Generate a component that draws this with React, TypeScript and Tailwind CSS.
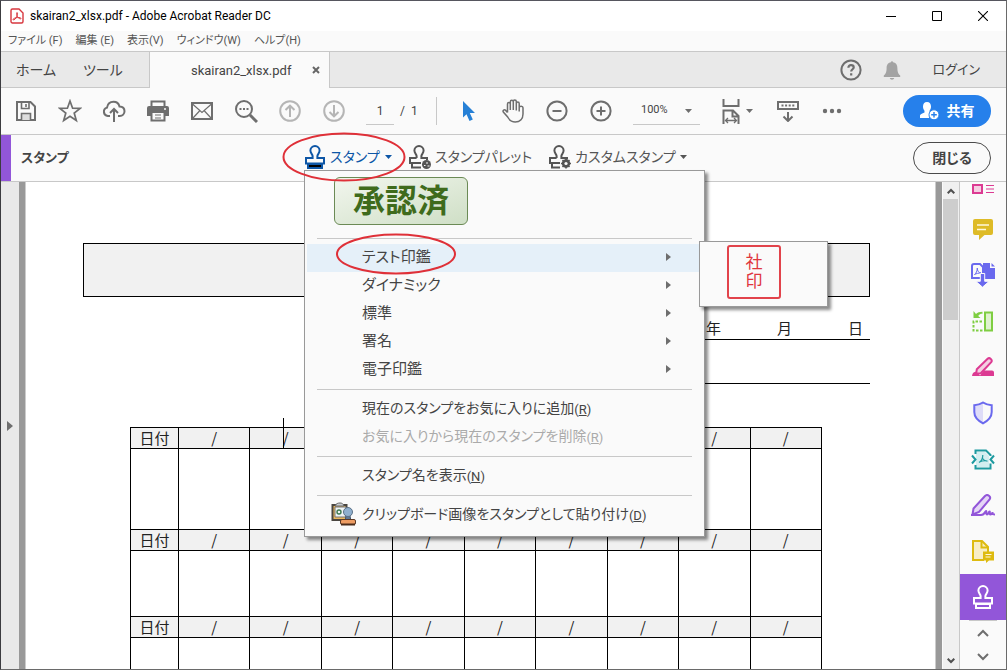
import type { ReactNode } from "react";

type IconProps = { w: number; h: number; className?: string; children: ReactNode };

function Svg({ w, h, className = "", children }: IconProps) {
  return (
    <svg
      width={w}
      height={h}
      viewBox={`0 0 ${w} ${h}`}
      fill="none"
      stroke="currentColor"
      strokeWidth="2"
      className={`shrink-0 ${className}`}
      aria-hidden="true"
    >
      {children}
    </svg>
  );
}

function Caret({ className = "" }: { className?: string }) {
  return (
    <Svg w={7} h={4} className={className}>
      <path d="M0 0h7L3.5 4z" fill="currentColor" stroke="none" />
    </Svg>
  );
}

const stampHead = "M7.6 13V11C7.6 9 5.4 8.4 5.4 5.6a4.6 4.6 0 0 1 9.2 0C14.6 8.4 12.4 9 12.4 11V13";

function StampIcon({ filled = false }: { filled?: boolean }) {
  return (
    <Svg w={20} h={24}>
      <path d={`${stampHead}H19V18.500H1V13z`} />
      <path d="M3 19h14v4H3z" />
      {filled && <path d="M4 20h12v2H4z" fill="#000" stroke="none" />}
    </Svg>
  );
}

function StampPaletteIcon() {
  return (
    <Svg w={22} h={24}>
      <path d={`${stampHead}H18V15M12 18H1V13h6.600M3 18v4.500h9`} />
      <circle cx="17.500" cy="19.500" r="4.500" fill="currentColor" stroke="none" />
      <path d="M15 20.500h1.500M18 17v2M18.500 21h2" stroke="#fafafa" strokeWidth="1" />
    </Svg>
  );
}

function StampGearIcon() {
  return (
    <Svg w={22} h={24}>
      <path d={`${stampHead}H18V14.500M11 18H1V13h6.600M3 18v4.500h8`} />
      <circle cx="17" cy="18.500" r="3" strokeWidth="2.400" />
      <path d="M17 13.500v10M12 18.500h10M13.500 15l7 7M20.500 15l-7 7" strokeWidth="1.600" />
      <circle cx="17" cy="18.500" r="1.600" fill="#fafafa" stroke="none" />
    </Svg>
  );
}

function ToolButton({ label, children, className = "w-11" }: { label: string; children: ReactNode; className?: string }) {
  return (
    <button type="button" aria-label={label} className={`flex h-8 shrink-0 items-center justify-center ${className}`}>
      {children}
    </button>
  );
}

function TitleBar() {
  return (
    <header className="flex h-[30px] shrink-0 items-center bg-white pl-[9px]">
      <Svg w={14} h={16} className="text-[#d7373f]">
        <path d="M2.500 1H9l4 4v8.500a1.500 1.500 0 0 1-1.500 1.500h-9A1.500 1.500 0 0 1 1 13.500v-11A1.500 1.500 0 0 1 2.500 1z" strokeWidth="1.400" />
        <path d="M3.200 11.800c-.8-1 2-2 4-2.200 2-.3 4 .1 3.800 1-.4 1-3-.6-3.800-2.400C6.500 6.700 6.300 4.600 7 4.600c.9 0 .5 2.500-.4 4.200-.8 1.600-2.600 3.900-3.400 3z" strokeWidth="1" />
      </Svg>
      <h1 className="ml-1.5 flex-1 text-xs whitespace-nowrap text-black">skairan2_xlsx.pdf - Adobe Acrobat Reader DC</h1>
      <div className="flex text-black">
        <ToolButton label="最小化" className="w-[46px]">
          <Svg w={10} h={10}><path d="M0 5.500h10" strokeWidth="1" /></Svg>
        </ToolButton>
        <ToolButton label="最大化" className="w-[46px]">
          <Svg w={10} h={10}><path d="M.5.5h9v9h-9z" strokeWidth="1" /></Svg>
        </ToolButton>
        <ToolButton label="ウィンドウを閉じる" className="w-[46px]">
          <Svg w={10} h={10}><path d="M0 0l10 10M10 0L0 10" strokeWidth="1.100" /></Svg>
        </ToolButton>
      </div>
    </header>
  );
}

function MenuBar() {
  const items = ["ファイル (F)", "編集 (E)", "表示(V)", "ウィンドウ(W)", "ヘルプ(H)"];
  return (
    <nav className="flex h-[21px] shrink-0 items-center gap-[13px] border-b border-[#c8c8c8] bg-[#fafafa] pl-[7px] text-[11px] text-[#555]">
      {items.map((t) => (
        <button key={t} type="button" className="whitespace-nowrap">{t}</button>
      ))}
    </nav>
  );
}

function TabBar() {
  return (
    <div className="flex h-9 shrink-0 bg-[#e9e9e9] text-[#444]">
      <div className="flex w-[149px] shrink-0 items-center gap-[27px] border-r border-b border-[#c8c8c8] pl-[15px] text-sm">
        <button type="button">ホーム</button>
        <button type="button">ツール</button>
      </div>
      <div className="flex w-[179px] shrink-0 items-center bg-[#fafafa] pl-[41px]">
        <button type="button" className="pt-0.5 text-[13px]">skairan2_xlsx.pdf</button>
        <button type="button" aria-label="タブを閉じる" className="ml-auto pr-[9px]">
          <Svg w={8} h={8} className="text-[#666]"><path d="M1 1l6 6M7 1L1 7" /></Svg>
        </button>
      </div>
      <div className="flex flex-1 items-center justify-end border-b border-l border-[#c8c8c8] pr-[26px]">
        <button type="button" aria-label="ヘルプ">
          <Svg w={22} h={22} className="text-[#6e6e6e]">
            <circle cx="11" cy="11" r="9.600" />
            <path d="M8.400 8.700C8.400 7 9.500 6.200 11 6.200s2.700.8 2.700 2.200c0 1.800-2.500 1.900-2.500 4.100M11.200 14.200v2.200" strokeWidth="2.200" />
          </Svg>
        </button>
        <button type="button" aria-label="通知" className="ml-[21px]">
          <Svg w={18} h={20} className="text-[#a3a3a3]">
            <path d="M8 2.200C8 .8 10 .8 10 2.200c3.300.6 4.400 2.900 4.400 6 0 4.300 1.200 6 2.800 7.300V17H.8v-1.500C2.400 14.200 3.600 12.500 3.600 8.200c0-3.100 1.100-5.400 4.400-6zM6.800 18h4.400c-.5 2.200-3.900 2.200-4.400 0z" fill="currentColor" stroke="none" />
          </Svg>
        </button>
        <button type="button" className="ml-8 text-[13px]">ログイン</button>
      </div>
    </div>
  );
}

function Toolbar() {
  return (
    <div className="flex h-[47px] shrink-0 items-center border-b border-[#c8c8c8] pl-[3px] text-[#6e6e6e]">
      <ToolButton label="保存">
        <Svg w={20} h={20}>
          <path d="M1 1h13.500L19 5.500V19H1z" />
          <path d="M5.500 1v6.500H13V1M10 3v3" strokeWidth="1.600" />
          <path d="M5.500 19v-6.500h9V19" fill="#ddd" strokeWidth="1.600" />
        </Svg>
      </ToolButton>
      <ToolButton label="お気に入り">
        <Svg w={24} h={24}>
          <path d="M12 2l2.600 7.200 7.600.2-6 4.700 2.100 7.400L12 17.200l-6.300 4.300 2.100-7.400-6-4.700 7.600-.2z" strokeWidth="1.700" />
        </Svg>
      </ToolButton>
      <ToolButton label="アップロード">
        <Svg w={24} h={22}>
          <path d="M8 16H5.800A4.300 4.300 0 0 1 5 7.600C5.600 4 8.300 1.800 11.500 1.800c3.300 0 5.300 2 6 4.700 3 .1 5 2.100 5 4.800 0 2.700-2 4.700-4.700 4.700H16" />
          <path d="M12 22V9M8 13l4-4 4 4" />
        </Svg>
      </ToolButton>
      <ToolButton label="印刷">
        <Svg w={22} h={22}>
          <path d="M4.500 7V1.500h13V7" />
          <path d="M2 6h18a2 2 0 0 1 2 2v8h-5v-4H5v4H0V8a2 2 0 0 1 2-2z" fill="currentColor" stroke="none" />
          <path d="M4.500 12v8.500h13V12z" fill="#fafafa" />
          <path d="M8 15h6M8 18h6" strokeWidth="1.200" />
          <path d="M17 9h2" stroke="#fafafa" strokeWidth="1.500" />
        </Svg>
      </ToolButton>
      <ToolButton label="メール">
        <Svg w={22} h={18}>
          <path d="M1 1h20v16H1z" />
          <path d="M1.500 2L11 10.500 20.500 2M2 16l6.500-7M20 16l-6.500-7" strokeWidth="1.200" />
        </Svg>
      </ToolButton>
      <ToolButton label="検索">
        <Svg w={24} h={24}>
          <circle cx="10" cy="10" r="8" />
          <path d="M16 16l7 7" strokeWidth="3" />
          <path d="M5.500 10h2M9 10h2M12.500 10h2" strokeWidth="1.800" />
        </Svg>
      </ToolButton>
      <ToolButton label="前のページ">
        <Svg w={22} h={22} className="text-[#b5b5b5]">
          <circle cx="11" cy="11" r="9.800" />
          <path d="M11 17V6M6.500 10L11 5.700l4.500 4.300" />
        </Svg>
      </ToolButton>
      <ToolButton label="次のページ">
        <Svg w={22} h={22} className="text-[#b5b5b5]">
          <circle cx="11" cy="11" r="9.800" />
          <path d="M11 5v11M6.500 12l4.500 4.300 4.500-4.300" />
        </Svg>
      </ToolButton>
      <div className="ml-[10px] flex items-center text-xs text-[#444]">
        <input aria-label="ページ番号" defaultValue="1" className="h-7 w-7 border-b border-[#c8c8c8] bg-transparent text-center outline-none" />
        <span className="ml-1.5 w-[17px] whitespace-nowrap">/&nbsp; 1</span>
      </div>
      <div className="ml-[19px] h-7 w-px shrink-0 bg-[#c8c8c8]" />
      <div className="ml-[10px] flex">
        <ToolButton label="選択ツール">
          <Svg w={14} h={20} className="text-[#2680d6]">
            <path d="M1 0v16.500l3.500-3.300 3 6.800 3.300-1.500-3-6.500H13z" fill="currentColor" stroke="none" />
          </Svg>
        </ToolButton>
        <ToolButton label="手のひらツール">
          <Svg w={24} h={24}>
            <path d="M6.500 13.500V5c0-2 2.800-2 2.800 0v6M9.300 11V3c0-2.200 3-2.200 3 0v8M12.300 11V2.500c0-2 3-2 3 0V11.500M15.300 11.500V4.500c0-2 2.900-2 2.900 0v8M18.200 12.500V8.500c.3-1.800 3.800-1.800 3.800.3V15c0 5-3.300 8-7.700 8-3.700 0-6-1.800-7.600-5L2.300 13c-.9-1.700 1-3 2.400-1.600l1.800 2.100" strokeWidth="1.500" />
          </Svg>
        </ToolButton>
        <ToolButton label="縮小">
          <Svg w={22} h={22}><circle cx="11" cy="11" r="9.600" /><path d="M6.500 11h9" /></Svg>
        </ToolButton>
        <ToolButton label="拡大">
          <Svg w={22} h={22}><circle cx="11" cy="11" r="9.600" /><path d="M6.500 11h9M11 6.500v9" /></Svg>
        </ToolButton>
      </div>
      <label className="ml-[10px] flex h-7 w-[67px] shrink-0 items-center border-b border-[#c8c8c8] pr-2 pl-2">
        <select aria-label="表示倍率" className="min-w-0 flex-1 appearance-none bg-transparent text-[11px] text-[#444] outline-none">
          <option>100%</option>
        </select>
        <Caret />
      </label>
      <button type="button" aria-label="幅に合わせる" className="ml-[22px] flex shrink-0 items-center gap-1.5">
        <Svg w={18} h={26}>
          <path d="M1.500 1v7h15V1" />
          <path d="M1.500 26V12.500H11l5.500 5.500v8M10.500 13v5.500H16" />
          <path d="M3.500 22.500h11M6 20l-2.500 2.500L6 25M12 20l2.500 2.500L12 25" strokeWidth="1.300" />
        </Svg>
        <Caret />
      </button>
      <ToolButton label="スクロール表示" className="ml-[23px] w-6">
        <Svg w={22} h={22}>
          <path d="M1 2h20v7H1z" />
          <path d="M4.500 5.500h13" strokeDasharray="2 1.600" />
          <path d="M11 12v9M6.500 16.500L11 21l4.500-4.500" />
        </Svg>
      </ToolButton>
      <ToolButton label="その他" className="ml-5 w-6">
        <Svg w={20} h={6}>
          <g fill="currentColor" stroke="none"><circle cx="3" cy="3" r="2.200" /><circle cx="10" cy="3" r="2.200" /><circle cx="17" cy="3" r="2.200" /></g>
        </Svg>
      </ToolButton>
      <button type="button" className="mr-[15px] ml-auto flex h-8 w-[88px] shrink-0 items-center justify-center gap-2 rounded-full bg-[#2680eb] text-sm font-bold text-white">
        <Svg w={19} h={18}>
          <path d="M7 0c2.700 0 4 2 4 4.500 0 2-.8 3.500-1.500 4.300v1.700l2 .8A6 6 0 0 0 9 16H0v-2.500c0-1.200 2-2 4.500-3V8.800C3.800 8 3 6.500 3 4.500 3 2 4.300 0 7 0z" fill="currentColor" stroke="none" />
          <circle cx="14" cy="12.800" r="5" fill="#fff" stroke="#2680eb" strokeWidth="1" />
          <path d="M14 10v5.600M11.200 12.800h5.600" stroke="#2680eb" strokeWidth="1.400" />
        </Svg>
        共有
      </button>
    </div>
  );
}

function ClipboardStampIcon() {
  return (
    <Svg w={26} h={24}>
      <path d="M1.500 3h14v15h-14z" fill="#e9b75c" stroke="#4a4640" />
      <path d="M4 5h11v10H4z" fill="#eef3f5" stroke="#777" strokeWidth="1" />
      <path d="M4 4c1-2.500 3-3 5-3s3 .5 4 3z" fill="#c8ccd0" stroke="#666" strokeWidth="1" />
      <circle cx="8" cy="10" r="2" stroke="#3c7a50" strokeWidth="1.400" />
      <path d="M15 14h4l1 5h-6z" fill="#5d7896" stroke="#46576b" strokeWidth="1" />
      <circle cx="17" cy="10" r="4.500" fill="#8fb0cf" stroke="#5c7187" strokeWidth="1" />
      <rect x="9.500" y="17.500" width="15" height="5" rx="1.500" fill="#ee9c62" stroke="#5b3a26" strokeWidth="1" />
      <path d="M10 22.500h14" stroke="#4a2d1c" />
    </Svg>
  );
}

function MenuRow({ text, accessKey, disabled, icon }: { text: string; accessKey?: string; disabled?: boolean; icon?: ReactNode }) {
  return (
    <button
      type="button"
      role="menuitem"
      disabled={disabled}
      className="flex h-7 items-center pb-0.5 text-sm whitespace-nowrap text-[#444] disabled:text-[#aaa]"
    >
      <span className="flex w-[55px] justify-end pr-[5px]">{icon}</span>
      <span>{text}</span>
      {accessKey && <span className="mt-1 text-[13px]">(<u>{accessKey}</u>)</span>}
    </button>
  );
}

function Separator() {
  return <hr className="mx-2.5 my-[5px] h-px border-0 bg-[#c8c8c8]" />;
}

function StampMenu() {
  const categories = ["テスト印鑑", "ダイナミック", "標準", "署名", "電子印鑑"];
  return (
    <div role="menu" className="absolute top-[35px] -left-px z-10 flex w-[401px] flex-col border border-[#999] bg-[#fafafa] px-0.5 pb-[7px] shadow-[3px_3px_3px_rgba(0,0,0,0.45)]">
      <button
        type="button"
        className="mt-1.5 mb-2 ml-[27px] flex h-12 w-[134px] items-center justify-center rounded-md border border-[#6b8a55] bg-linear-to-br from-[#f2f6ee] to-[#cfdfc6] text-[32px] leading-none font-bold text-[#3f6b1c]"
      >
        承認済
      </button>
      <Separator />
      {categories.map((c, i) => (
        <div key={c} className="relative flex flex-col">
          <button
            type="button"
            role="menuitem"
            aria-haspopup="menu"
            className={`mr-[3px] flex h-7 items-center justify-between pr-7 pb-0.5 pl-[55px] text-[15px] whitespace-nowrap text-[#444] ${i === 0 ? "bg-[#e5f0f9]" : ""}`}
          >
            {c}
            <Svg w={5} h={8} className="text-[#6e6e6e]"><path d="M0 0l5 4-5 4z" fill="currentColor" stroke="none" /></Svg>
          </button>
          {i === 0 && (
            <>
              <div role="menu" className="absolute -top-[3px] left-[392px] z-10 flex w-[129px] border border-[#999] bg-[#fafafa] pt-[3px] pb-[7px] pl-[27px] shadow-[3px_3px_3px_rgba(0,0,0,0.45)]">
                <button type="button" className="flex h-[54px] w-[54px] flex-col items-center justify-center rounded-[3px] border-2 border-[#e2434b] text-[17px] leading-[19px] text-[#e0363e]">
                  <span>社</span>
                  <span>印</span>
                </button>
              </div>
              <Svg w={122} h={42} className="pointer-events-none absolute -top-[11px] left-[28px]">
                <ellipse cx="61" cy="21" rx="59" ry="19.500" stroke="#df3038" />
              </Svg>
            </>
          )}
        </div>
      ))}
      <Separator />
      <MenuRow text="現在のスタンプをお気に入りに追加" accessKey="R" />
      <MenuRow text="お気に入りから現在のスタンプを削除" accessKey="R" disabled />
      <Separator />
      <MenuRow text="スタンプ名を表示" accessKey="N" />
      <Separator />
      <MenuRow text="クリップボード画像をスタンプとして貼り付け" accessKey="D" icon={<ClipboardStampIcon />} />
    </div>
  );
}

function StampBar() {
  return (
    <div className="flex h-[47px] shrink-0 items-center border-b border-[#c8c8c8] text-[#555]">
      <div className="h-full w-2.5 shrink-0 bg-[#9256d9]" />
      <h2 className="w-[294px] shrink-0 pl-2.5 text-[13px] font-bold text-[#444]">スタンプ</h2>
      <div className="relative h-full w-[104px] shrink-0">
        <button type="button" className="flex h-full items-center gap-[5px] pb-0.5 text-sm whitespace-nowrap text-[#0d56a6]">
          <StampIcon filled />
          スタンプ
          <Caret />
        </button>
        <StampMenu />
        <Svg w={124} h={50} className="pointer-events-none absolute -top-[3px] -left-[23px] z-20">
          <ellipse cx="62" cy="25" rx="60.500" ry="23.500" stroke="#df3038" />
        </Svg>
      </div>
      <button type="button" className="flex w-[140px] shrink-0 items-center gap-1 pb-0.5 text-sm whitespace-nowrap">
        <StampPaletteIcon />
        スタンプパレット
      </button>
      <button type="button" className="flex shrink-0 items-center gap-1 pb-0.5 text-sm whitespace-nowrap">
        <StampGearIcon />
        カスタムスタンプ
        <Caret />
      </button>
      <button type="button" className="mr-[15px] ml-auto h-8 w-[78px] shrink-0 rounded-full border border-[#4b4b4b] text-sm font-bold text-[#444]">
        閉じる
      </button>
    </div>
  );
}

const approvalRows = [
  { height: "h-[81px]", dates: ["/", "/", "", "", "", "", "", "/", "/"] },
  { height: "h-[66px]", dates: ["/", "/", "/", "/", "/", "/", "/", "/", "/"] },
  { height: "h-[66px]", dates: ["/", "/", "/", "/", "/", "/", "/", "/", "/"] },
];

function DocumentPage() {
  return (
    <main className="relative min-w-0 flex-1 overflow-hidden border-l border-[#ccc] bg-white pt-[61px] pr-[65px] pl-[57px] font-['Noto_Sans_CJK_JP',sans-serif] text-[#222]">
      <div className="h-[54px] border border-black bg-[#f1f1f1]" />
      <div className="ml-auto flex h-[43px] w-[300px] items-end justify-end gap-14 border-b border-black text-[15px] leading-[22px]">
        <span>年</span>
        <span>月</span>
        <span className="pr-[7px]">日</span>
      </div>
      <div className="ml-auto h-11 w-[300px] border-b border-black" />
      <table className="mt-[43px] ml-[47px] w-[692px] table-fixed border-collapse text-[15px] leading-5">
        <colgroup>
          <col className="w-12" />
          {approvalRows[0].dates.map((_, i) => <col key={i} />)}
        </colgroup>
        <tbody>
          {approvalRows.map((row, r) => [
            <tr key={`d${r}`} className="h-[21px] bg-[#f1f1f1]">
              <th className="border border-black p-0 font-normal">日付</th>
              {row.dates.map((d, i) => <td key={i} className="border border-black p-0 text-center">{d}</td>)}
            </tr>,
            <tr key={`b${r}`} className={row.height}>
              {Array.from({ length: 10 }, (_, i) => <td key={i} className="border border-black p-0" />)}
            </tr>,
          ])}
        </tbody>
      </table>
      <div className="absolute top-[236px] left-[257px] h-[30px] w-px bg-black" />
    </main>
  );
}

function ToolsPane() {
  const tools: { label: string; icon: ReactNode }[] = [
    {
      label: "注釈",
      icon: (
        <Svg w={20} h={21}>
          <path d="M2 0h16a2 2 0 0 1 2 2v12a2 2 0 0 1-2 2h-6.500L6 21v-5H2a2 2 0 0 1-2-2V2a2 2 0 0 1 2-2z" fill="#debb27" stroke="none" />
          <path d="M4 6h12M4 10.500h9" stroke="#fff8dc" strokeWidth="1.600" />
        </Svg>
      ),
    },
    {
      label: "ファイルを結合",
      icon: (
        <Svg w={24} h={24} className="text-[#6a69ee]">
          <path d="M12 0h7v5h5v11H12z" fill="currentColor" stroke="none" />
          <path d="M20.500 0L24 3.500h-3.500z" fill="currentColor" stroke="none" />
          <path d="M3 1h6l3 3v11H1V3a2 2 0 0 1 2-2z" fill="#fafafa" />
          <path d="M3.500 11.500c1.500-1 2.800-3.500 2.800-6.500 0 3 1.200 4.500 3.700 5-2.500 0-4.500.5-6.500 1.500z" strokeWidth="1" />
          <path d="M9.300 10.500h4.400v7.800h4.500L11.500 24.200 4.800 18.300h4.500z" fill="currentColor" stroke="#fafafa" strokeWidth="1" />
        </Svg>
      ),
    },
    {
      label: "ページを整理",
      icon: (
        <Svg w={22} h={21} className="text-[#7fce42]">
          <path d="M13 1.500h7v18h-7z" fill="#dff2cf" />
          <path d="M10 10.500H1.500v9H11" strokeDasharray="2.500 1.500" />
          <path d="M1.500 0v7h7L6.200 5c1-1.700 2.300-2.300 4.300-2.300V.8C7.500.8 5.500 1.500 4 3z" fill="currentColor" stroke="none" />
        </Svg>
      ),
    },
    {
      label: "墨消し",
      icon: (
        <Svg w={22} h={20} className="text-[#dc3a92]">
          <path d="M0 19c.5-3 1.500-4 4.500-4.500L8 18.500l4-5h8a2 2 0 0 1 2 2V19z" fill="currentColor" stroke="none" />
          <path d="M4.800 12.200L15.600 1.800c2-1.800 5.300 1 3.600 3.300L8.800 16.200 4.200 16.700z" fill="#f4cfe2" />
        </Svg>
      ),
    },
    {
      label: "保護",
      icon: (
        <Svg w={20} h={24} className="text-[#6a69ee]">
          <path d="M10 2v20c-5-2.500-8.500-6-8.500-11V4.500C5 4.500 7.500 3.600 10 2z" fill="#dedcf8" stroke="none" />
          <path d="M10 1.500c2.500 1.700 5 2.600 8.700 2.800V11c0 5-3.700 8.700-8.700 11.300C5 19.700 1.300 16 1.300 11V4.300C5 4.100 7.500 3.200 10 1.500z" />
        </Svg>
      ),
    },
    {
      label: "PDFを最適化",
      icon: (
        <Svg w={24} h={21} className="text-[#1d9aa0]">
          <path d="M5 3h9l4 4v11H5z" fill="#d3eef0" stroke="none" />
          <path d="M4.500 5V1.500H15L19.500 6v1M4.500 16v3.500h15V14.500" />
          <path d="M1 6.500l3.500 4-3.500 4M23 6.500l-3.500 4 3.500 4" />
          <path d="M8 13.500c2-1.200 3.800-3.500 3.800-7.500M11.600 9.500c1 1.700 2.400 2.500 4.900 2.700M8.500 13c2-1 4-1.500 7-1.200" strokeWidth="1.200" />
        </Svg>
      ),
    },
    {
      label: "入力と署名",
      icon: (
        <Svg w={24} h={22} className="text-[#9256d9]">
          <path d="M1.500 20.500l1-6L14 2c2.500-2.500 6.500.8 4.600 3.500L8 18z" fill="#e5d6f6" />
          <path d="M0 21h10c4 0 4-4 5-4s-.5 3.500 1 3.500 1.500-3 2.500-3-.5 3 1 3c1 0 1-1.500 2-1.500 0 1 1 1.500 2.500 1.500" />
        </Svg>
      ),
    },
    {
      label: "注釈用に送信",
      icon: (
        <Svg w={22} h={23} className="text-[#debb10]">
          <path d="M12 20H1V1h9l6 6v5" fill="#f8eec6" />
          <path d="M9.500 1v6.500H16" />
          <path d="M11 11.500h11v9h-5L14 23v-2.500h-3z" fill="currentColor" stroke="none" />
          <path d="M13.500 14.500h6M13.500 17h5" stroke="#fff8dc" strokeWidth="1.200" />
        </Svg>
      ),
    },
  ];
  return (
    <aside className="flex w-[47px] shrink-0 flex-col items-center border-l border-[#c8c8c8] bg-[#fafafa]">
      <button type="button" aria-label="PDFを編集" className="flex h-6 w-full items-start justify-center pt-0.5">
        <Svg w={22} h={10} className="text-[#dc3a92]">
          <path d="M1 1h9v8H1z" fill="#f4cfe2" />
          <path d="M14 1.500h8M14 5h8M14 8.500h8" strokeWidth="1" />
        </Svg>
      </button>
      {tools.map((t) => (
        <button key={t.label} type="button" aria-label={t.label} className="flex h-[46px] w-full shrink-0 items-center justify-center">
          {t.icon}
        </button>
      ))}
      <button type="button" aria-label="スタンプ" className="flex h-[46px] w-full shrink-0 items-center justify-center bg-[#9256d9] text-white">
        <StampIcon />
      </button>
      <div className="h-px w-7 bg-[#c8c8c8]" />
      <div className="flex flex-1 flex-col items-center justify-between py-2 text-[#6e6e6e]">
        <button type="button" aria-label="上へ"><Svg w={12} h={8} className="block"><path d="M1 7l5-5 5 5" /></Svg></button>
        <button type="button" aria-label="下へ"><Svg w={12} h={8} className="block"><path d="M1 1l5 5 5-5" /></Svg></button>
      </div>
    </aside>
  );
}

export default function App() {
  return (
    <div className="flex h-screen flex-col overflow-hidden border border-t-[#56565e] border-r-[#6a6a6a] border-b-[#6a6a6a] border-l-[#3c3c40] bg-[#fafafa] font-['Roboto','Noto_Sans_CJK_JP',sans-serif] [font-feature-settings:'palt']">
      <TitleBar />
      <MenuBar />
      <TabBar />
      <Toolbar />
      <StampBar />
      <div className="flex min-h-0 flex-1">
        <div className="flex w-[18px] shrink-0 items-center justify-center bg-[#e9e9e9]">
          <button type="button" aria-label="ナビゲーションパネルを開く">
            <Svg w={6} h={10} className="text-[#6e6e6e]"><path d="M0 0l6 5-6 5z" fill="currentColor" stroke="none" /></Svg>
          </button>
        </div>
        <div className="w-1.5 shrink-0 bg-[#999]" />
        <DocumentPage />
        <div className="w-[7px] shrink-0 border-l border-[#ccc] bg-[#999]" />
        <div className="ml-px flex w-4 shrink-0 flex-col items-center bg-[#f0f0f0] text-[#505050]">
          <button type="button" aria-label="上にスクロール" className="flex h-[17px] shrink-0 items-center">
            <Svg w={8} h={6}><path d="M.7 5.300L4 2l3.300 3.300" /></Svg>
          </button>
          <div className="mr-px h-[121px] w-[15px] bg-[#cdcdcd]" />
          <button type="button" aria-label="下にスクロール" className="mt-auto flex h-[17px] shrink-0 items-center">
            <Svg w={8} h={6}><path d="M.7.7L4 4 7.300.7" /></Svg>
          </button>
        </div>
        <ToolsPane />
      </div>
    </div>
  );
}
